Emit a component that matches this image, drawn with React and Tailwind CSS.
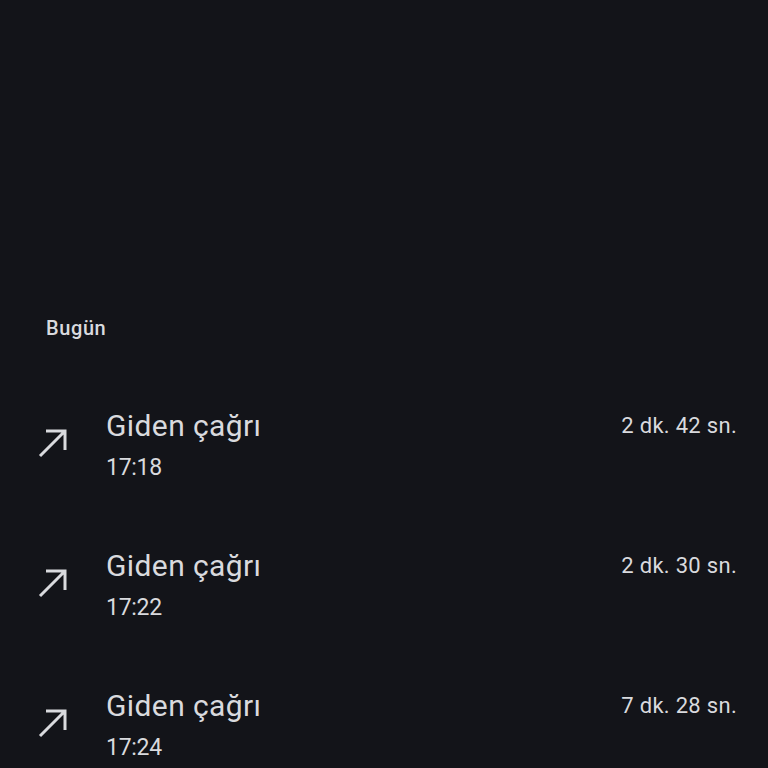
import React from 'react';

const calls = [
  { time: '17:18', duration: '2 dk. 42 sn.' },
  { time: '17:22', duration: '2 dk. 30 sn.' },
  { time: '17:24', duration: '7 dk. 28 sn.' },
];

function OutgoingArrow() {
  return (
    <svg width="32" height="32" viewBox="0 0 32 32" fill="none" className="text-[#d9dade]">
      <path d="M4 29 L29 4 M10 4 H29 V23" stroke="currentColor" strokeWidth="3" />
    </svg>
  );
}

export default function App() {
  return (
    <div
      className="w-[768px] h-[768px] overflow-hidden bg-[#131419] text-[#d9dade]"
      style={{ fontFamily: 'Roboto, "Noto Sans", sans-serif' }}
    >
      <div className="pt-[315px] pl-[46px] text-[20px] font-medium leading-[26px] tracking-[0.6px]">
        Bugün
      </div>
      <div className="mt-[67px] flex flex-col gap-[67px]">
        {calls.map((c, i) => (
          <div key={i} className="flex items-start pl-[36px] pr-[31px]">
            <div className="mt-[19px] w-[70px]">
              <OutgoingArrow />
            </div>
            <div className="flex-1">
              <div className="text-[30px] leading-[36px] tracking-[0.4px]">Giden çağrı</div>
              <div className="mt-[10px] text-[23px] leading-[27px] tracking-[-0.3px]">{c.time}</div>
            </div>
            <div className="mt-[4px] text-[22px] leading-[28px] tracking-[0.3px]">{c.duration}</div>
          </div>
        ))}
      </div>
    </div>
  );
}
